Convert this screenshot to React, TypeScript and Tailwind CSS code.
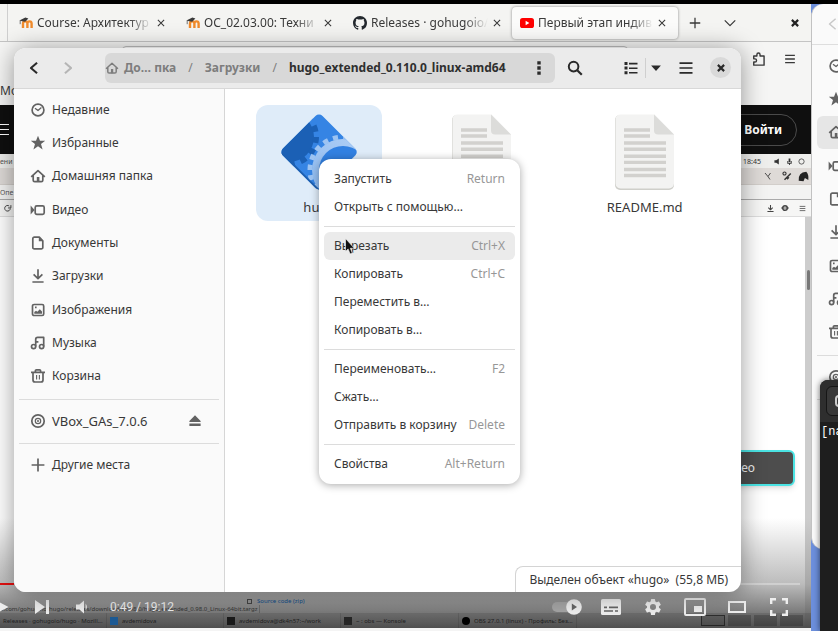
import type { ReactNode } from "react";

const stroke = {
  fill: "none",
  stroke: "currentColor",
  strokeWidth: 1.7,
  strokeLinejoin: "round" as const,
};

function Icon({ children, className = "size-4" }: { children: ReactNode; className?: string }) {
  return (
    <svg viewBox="0 0 16 16" className={`shrink-0 ${className}`} aria-hidden="true">
      {children}
    </svg>
  );
}

const HomeIcon = ({ className }: { className?: string }) => (
  <Icon className={className}>
    <path {...stroke} d="M1.2 8.8 8 2.6l6.8 6.200M3.200 7.500v4.700q0 1.500 1.500 1.500h6.600q1.500 0 1.500-1.500V7.500" />
    <path fill="currentColor" d="M6.8 9h2.6v5H6.8z" />
  </Icon>
);

const CloseIcon = ({ className, bold }: { className?: string; bold?: boolean }) => (
  <Icon className={className}>
    <path {...stroke} strokeWidth={bold ? 3.4 : 1.7} d="m3 3 10 10M13 3 3 13" />
  </Icon>
);

const BarsIcon = ({ className }: { className?: string }) => (
  <Icon className={className}>
    <path {...stroke} d="M1.5 3.2h13M1.5 8h13M1.5 12.8h13" />
  </Icon>
);

const places: { label: string; icon: ReactNode }[] = [
  {
    label: "Недавние",
    icon: (
      <Icon>
        <circle {...stroke} cx="8" cy="8" r="5.9" />
        <path {...stroke} strokeWidth={1.3} d="m5 6.2 3 2.4 3.4-3" />
      </Icon>
    ),
  },
  {
    label: "Избранные",
    icon: (
      <Icon>
        <path fill="currentColor" d="m8 .8 2 5h5.2l-4.2 3.3 1.6 5.4L8 11.3l-4.6 3.2L5 9.1.8 5.8H6z" />
      </Icon>
    ),
  },
  { label: "Домашняя папка", icon: <HomeIcon /> },
  {
    label: "Видео",
    icon: (
      <Icon>
        <rect {...stroke} x="5.2" y="3.8" width="9" height="8.6" rx="1.6" />
        <path fill="currentColor" d="M.6 3.600 4.600 8 .6 12.400z" />
      </Icon>
    ),
  },
  {
    label: "Документы",
    icon: (
      <Icon>
        <path {...stroke} d="M4.3 2.2h5l3.5 3.6v6.6a1.5 1.5 0 0 1-1.5 1.5h-7a1.5 1.5 0 0 1-1.5-1.5V3.7a1.5 1.5 0 0 1 1.5-1.5z" />
        <path fill="currentColor" d="M8.8 2v4.2H13z" />
      </Icon>
    ),
  },
  {
    label: "Загрузки",
    icon: (
      <Icon>
        <path {...stroke} d="M8 1.2v9.2M3.6 6.4 8 10.6l4.4-4.2M2.4 14h11.2" />
      </Icon>
    ),
  },
  {
    label: "Изображения",
    icon: (
      <Icon>
        <rect {...stroke} x="2.5" y="2.5" width="11.2" height="11" rx="1.6" />
        <path fill="currentColor" d="M4.3 11.8V10L6 8.8l1.4 1 2.4-2.6 2.2 2.4v2.2zM5 4.6h1.6v1.6H5z" />
      </Icon>
    ),
  },
  {
    label: "Музыка",
    icon: (
      <Icon>
        <circle {...stroke} cx="3.6" cy="11.6" r="2.1" />
        <circle {...stroke} cx="11.6" cy="11.6" r="2.1" />
        <path {...stroke} d="M5.7 11.6V4.4q0-2 2-2h6v9.2M6 6.8h2.4" />
      </Icon>
    ),
  },
  {
    label: "Корзина",
    icon: (
      <Icon>
        <path {...stroke} d="M1 4.4h14M5.4 4V2.8q0-1 1-1h3.2q1 0 1 1V4M3 4.6v7.4q0 2 2 2h6q2 0 2-2V4.6" />
        <path {...stroke} strokeWidth={1.1} d="M6.6 7v4.6M9.4 7v4.6" />
      </Icon>
    ),
  },
];

const DiscIcon = () => (
  <Icon>
    <circle {...stroke} cx="8" cy="8" r="6.2" />
    <circle {...stroke} strokeWidth={1.2} cx="8" cy="8" r="2.7" />
    <circle fill="currentColor" cx="8" cy="8" r="1" />
  </Icon>
);

function Sidebar({ compact = false, active }: { compact?: boolean; active?: string }) {
  const label = (text: string) => (compact ? null : <span className="text-[#383838]">{text}</span>);
  return (
    <nav className={`flex flex-col px-[5px] pt-1 text-[#626262] ${compact ? "w-[210px]" : "w-[211px] border-r border-[#d6d6d6]"} shrink-0 bg-[#fafafa]`}>
      <ul className="flex h-[300px] flex-col">
        {places.map((p) => (
          <li key={p.label} className="flex flex-1">
            <a
              href="#"
              aria-label={p.label}
              className={`flex flex-1 items-center gap-[6px] rounded-md px-[11px] ${p.label === active ? "bg-[#e6e6e6]" : ""}`}
            >
              {p.icon}
              {label(p.label)}
            </a>
          </li>
        ))}
      </ul>
      <hr className="mt-1.5 mb-1 border-[#dcdcdc]" />
      <div className="flex h-[33px] items-center gap-[6px] pr-4 pl-[11px] text-[13px]">
        <DiscIcon />
        {label("VBox_GAs_7.0.6")}
        {!compact && (
          <button aria-label="Извлечь" className="ml-auto">
            <Icon>
              <path fill="currentColor" d="M8 2.2 13.6 8v1H2.4V8zM2.4 10.6h11.2V13H2.4z" />
            </Icon>
          </button>
        )}
      </div>
      <hr className="mt-1.5 mb-1 border-[#dcdcdc]" />
      <a href="#" aria-label="Другие места" className="flex h-[33px] items-center gap-[6px] pl-[11px]">
        <Icon>
          <path {...stroke} d="M8 1.6v12.8M1.6 8h12.8" />
        </Icon>
        {label("Другие места")}
      </a>
    </nav>
  );
}

const MoodleIcon = () => (
  <svg viewBox="0 0 14 14" className="size-[14px] shrink-0" aria-hidden="true">
    <path fill="none" stroke="#f08b2c" strokeWidth="2.4" d="M4 12V7.6Q4 5.4 6.2 5.4T8.4 7.6V12M8.4 12V7.6q0-2.2 2.1-2.2t2.1 2.2V12" />
    <path fill="#3b3b3b" d="m.4 4.6 6-3 3 .8-3.2 3.4-3-.6z" />
    <path stroke="#3b3b3b" strokeWidth=".7" d="M1.2 4.6v3.6" />
  </svg>
);

const GithubIcon = () => (
  <svg viewBox="0 0 16 16" className="size-[14px] shrink-0" aria-hidden="true">
    <path
      fill="#24292f"
      d="M8 0C3.58 0 0 3.58 0 8c0 3.54 2.29 6.53 5.47 7.59.4.07.55-.17.55-.38 0-.19-.01-.82-.01-1.49-2.01.37-2.53-.49-2.69-.94-.09-.23-.48-.94-.82-1.13-.28-.15-.68-.52-.01-.53.63-.01 1.08.58 1.23.82.72 1.21 1.87.87 2.33.66.07-.52.28-.87.51-1.07-1.78-.2-3.64-.89-3.64-3.95 0-.87.31-1.59.82-2.15-.08-.2-.36-1.02.08-2.12 0 0 .67-.21 2.2.82.64-.18 1.32-.27 2-.27s1.36.09 2 .27c1.53-1.04 2.2-.82 2.2-.82.44 1.1.16 1.92.08 2.12.51.56.82 1.27.82 2.15 0 3.07-1.87 3.75-3.65 3.95.29.25.54.73.54 1.48 0 1.07-.01 1.93-.01 2.2 0 .21.15.46.55.38A8.01 8.01 0 0 0 16 8c0-4.42-3.58-8-8-8z"
    />
  </svg>
);

const YoutubeIcon = () => (
  <svg viewBox="0 0 14 14" className="size-[14px] shrink-0" aria-hidden="true">
    <rect x="0" y="2" width="14" height="10" rx="2.6" fill="#f00" />
    <path fill="#fff" d="m5.6 4.8 3.8 2.2-3.8 2.2z" />
  </svg>
);

const tabs = [
  { title: "Course: Архитектур", icon: <MoodleIcon /> },
  { title: "ОС_02.03.00: Техни", icon: <MoodleIcon /> },
  { title: "Releases · gohugoio/", icon: <GithubIcon /> },
  { title: "Первый этап индив", icon: <YoutubeIcon />, active: true },
];

const tasks = [
  { title: "Releases · gohugoio/hugo · Mozill...", width: "w-[107px]", icon: null },
  { title: "avdemidova", width: "w-[117px]", icon: <span className="size-2 shrink-0 bg-[#1d5a94]" /> },
  { title: "avdemidova@dk4n57:~/work", width: "w-[117px]", icon: <span className="size-2 shrink-0 bg-[#1a1a1a]" /> },
  { title: "~ : obs — Konsole", width: "w-[118px]", icon: <span className="size-2 shrink-0 bg-[#262626]" /> },
  { title: "OBS 27.0.1 (linux) - Профиль: Без...", width: "w-[118px]", icon: <span className="size-2 shrink-0 rounded-full bg-black" /> },
];

function PlayerButton({ label, width = "w-[42px]", children }: { label: string; width?: string; children: ReactNode }) {
  return (
    <button aria-label={label} className={`flex h-full shrink-0 items-center justify-center ${width}`}>
      {children}
    </button>
  );
}

function PlayerControls() {
  return (
    <div className="absolute inset-x-0 bottom-0 text-[#eee]">
      <div className="mr-[11px] flex h-[2px] bg-white/30">
        <span className="w-[14px] bg-[#e01010]" />
      </div>
      <div className="flex h-[43px] items-center pr-[11px]">
        <PlayerButton label="Воспроизвести" width="w-[21px]">
          <svg viewBox="0 0 21 20" className="h-5 w-[21px]">
            <path fill="currentColor" d="M0 5.5 8.5 10 0 14.5z" />
          </svg>
        </PlayerButton>
        <PlayerButton label="Следующее">
          <svg viewBox="0 0 20 20" className="size-5">
            <path fill="currentColor" d="m3 3 10 7-10 7zM14 3h3v14h-3z" />
          </svg>
        </PlayerButton>
        <PlayerButton label="Звук" width="w-10">
          <svg viewBox="0 0 20 20" className="size-5">
            <path fill="currentColor" d="M3 7.4h3.4L11 3.5v13l-4.6-3.9H3zM12.6 6.6q2.6 3.4 0 6.8z" />
          </svg>
        </PlayerButton>
        <span className="ml-[7px] font-['Roboto',sans-serif] text-[12px]">0:49 / 19:12</span>
        <span className="ml-auto" />
        <PlayerButton label="Автовоспроизведение" width="w-[46px]">
          <svg viewBox="0 0 30 16" className="h-4 w-[30px]">
            <rect x="0" y="3" width="26" height="10" rx="5" fill="#a5a5a5" />
            <circle cx="22" cy="8" r="7.8" fill="#eee" />
            <path fill="#666" d="m19.8 4.6 5.2 3.4-5.2 3.4z" />
          </svg>
        </PlayerButton>
        <PlayerButton label="Субтитры">
          <svg viewBox="0 0 20 16" className="h-4 w-5">
            <rect width="20" height="16" rx="1.6" fill="currentColor" />
            <path stroke="#666" strokeWidth="1.6" d="M3 8.4h3M8 8.4h9M3 12h9M14 12h3" />
          </svg>
        </PlayerButton>
        <PlayerButton label="Настройки">
          <svg viewBox="0 0 24 24" className="size-5">
            <path
              fill="currentColor"
              d="M19.14 12.94c.04-.3.06-.61.06-.94 0-.32-.02-.64-.07-.94l2.03-1.58a.49.49 0 0 0 .12-.61l-1.92-3.32a.49.49 0 0 0-.59-.22l-2.39.96a7 7 0 0 0-1.62-.94l-.36-2.54a.48.48 0 0 0-.48-.41h-3.84a.47.47 0 0 0-.47.41l-.36 2.54a7 7 0 0 0-1.62.94l-2.39-.96a.48.48 0 0 0-.59.22L2.74 8.87a.47.47 0 0 0 .12.61l2.03 1.58a6 6 0 0 0-.02 1.88l-2.03 1.58a.49.49 0 0 0-.12.61l1.92 3.32c.12.22.37.29.59.22l2.39-.96a7 7 0 0 0 1.62.94l.36 2.54c.05.24.24.41.48.41h3.84c.24 0 .44-.17.47-.41l.36-2.54a7 7 0 0 0 1.62-.94l2.39.96c.22.08.47 0 .59-.22l1.92-3.32a.47.47 0 0 0-.12-.61zM12 15.6a3.6 3.6 0 1 1 0-7.2 3.6 3.6 0 0 1 0 7.2z"
            />
          </svg>
        </PlayerButton>
        <PlayerButton label="Мини-проигрыватель">
          <svg viewBox="0 0 22 18" className="h-[18px] w-[22px]">
            <rect x="1" y="1" width="20" height="16" rx="1" fill="none" stroke="currentColor" strokeWidth="2" />
            <path fill="currentColor" d="M10 8h8v6h-8z" />
          </svg>
        </PlayerButton>
        <PlayerButton label="Широкий экран">
          <svg viewBox="0 0 18 12" className="h-3 w-[18px]">
            <rect x="1" y="1" width="16" height="10" fill="none" stroke="currentColor" strokeWidth="2" />
          </svg>
        </PlayerButton>
        <PlayerButton label="Полный экран">
          <svg viewBox="0 0 18 18" className="size-[18px]">
            <path fill="none" stroke="currentColor" strokeWidth="2.4" d="M1.2 6V1.2H6M12 1.2h4.8V6M16.8 12v4.8H12M6 16.8H1.2V12" />
          </svg>
        </PlayerButton>
      </div>
    </div>
  );
}

function VideoFrame() {
  return (
    <section className="relative flex flex-1 flex-col overflow-hidden bg-white text-[7px] leading-none text-[#555]">
      <div className="flex h-[14px] shrink-0 items-center justify-between bg-[#eeeeec] pr-[6px]">
        <span>ени</span>
        <div className="flex items-center gap-[5px] text-[#333]">
          <span className="mr-2">18:45</span>
          <Icon className="size-[7px]">
            <path fill="currentColor" d="M1 5h4l6-4v14l-6-4H1z" />
          </Icon>
          <Icon className="size-[7px]">
            <path fill="currentColor" d="M6 1h4v8H6zM3 7h2v4h6V7h2v6H9v3H7v-3H3z" />
          </Icon>
          <Icon className="size-[7px]">
            <circle {...stroke} cx="8" cy="8" r="6" />
          </Icon>
        </div>
      </div>
      <div className="flex h-[17px] shrink-0 items-center justify-end gap-[6px] border-b border-[#d2ceca] bg-[#dedad7] pr-[2px] text-[#333]">
        <Icon className="size-2">
          <path {...stroke} d="m2 2 6 7 5-7M8 9l4 6" />
        </Icon>
        <Icon className="ml-1 size-[10px]">
          <circle {...stroke} cx="4" cy="4" r="2.500" />
          <path {...stroke} strokeWidth={2.4} d="M4 14 14 4M8 13l3-3" />
        </Icon>
        <Icon className="size-[11px]">
          <path fill="#222" d="M1 14Q0 2 12 1q4 4 3 12l-5-3-2 5z" />
        </Icon>
      </div>
      <div className="flex h-[15px] shrink-0 items-center border-b border-[#aaa] bg-[#f3f3f2]">Опе</div>
      <div className="flex h-[17px] shrink-0 items-center border-b border-[#ddd] bg-[#f6f6f5] pr-[5px] pl-[3px] text-[#444]">
        <Icon className="size-[9px]">
          <path {...stroke} d="M13 8a5 5 0 1 1-2-4.4M14 2v5H9" />
        </Icon>
        <div className="ml-auto flex items-center gap-[7px]">
          <Icon className="size-[7px]">
            <path {...stroke} strokeWidth={2.4} d="M8 0v10M3 6l5 5 5-5M1 15h14" />
          </Icon>
          <Icon className="size-[8px]">
            <circle {...stroke} strokeWidth={3} cx="8" cy="8" r="4.6" />
            <path {...stroke} d="M0 8h16" />
          </Icon>
          <BarsIcon className="ml-[3px] size-[7px]" />
        </div>
      </div>
      <div className="flex flex-1 justify-end bg-white">
        <div className="mt-[233px] mr-[10px] flex h-9 w-[130px] items-center justify-end rounded-md border-2 border-[#4be3e3] bg-[#4d4d4d] pr-[38px] text-[12px] text-[#eee] shadow-md">
          ео
        </div>
        <div className="flex w-[6px] justify-center bg-[#cdcdcd] pt-[53px]">
          <span className="h-5 w-[3px] rounded-full bg-[#777]" />
        </div>
      </div>
      <div className="absolute inset-x-0 bottom-0 h-[110px] bg-linear-to-b from-transparent via-[#8f8f8f]/60 via-60% to-[#585858]" />
      <div className="absolute inset-x-0 bottom-0 text-[#1f1f1f]">
        <div className="flex items-center gap-[5px] pb-px pl-[247px] text-[6px] text-[#0f4c8a]">
          <span className="size-[5px] border border-[#444]" />
          <span>Source code (zip)</span>
        </div>
        <div className="flex h-2 w-[260px] items-center border-r border-black/20 whitespace-nowrap text-[6px] text-[#333]">
          b.com/gohugoio/hugo/releases/download/v0.98.0/hugo_extended_0.98.0_Linux-64bit.targz
        </div>
        <div className="flex h-[15px] items-center bg-black/10 text-[6px] whitespace-nowrap">
          {tasks.map((t) => (
            <span key={t.title} className={`flex h-full items-center gap-1 overflow-hidden border-r border-black/10 pl-[3px] ${t.width}`}>
              {t.icon}
              {t.title}
            </span>
          ))}
          <div className="mr-2 ml-auto flex h-[11px] gap-[3px]">
            <span className="w-6 border border-black/50 bg-black/10" />
            <span className="w-[23px] bg-black/20" />
            <span className="w-[23px] bg-black/20" />
            <span className="w-[23px] bg-black/20" />
          </div>
        </div>
      </div>
      <PlayerControls />
    </section>
  );
}

function Browser() {
  return (
    <div className="absolute inset-y-0 right-[27px] left-0 flex flex-col bg-[#f5f5f4] pt-1 text-[#3a3a3a]">
      <div className="flex h-[38px] shrink-0 items-center border-b border-[#c4c4c4] bg-[#f4f4f2]">
        <span className="mr-[3px] h-full w-2 shrink-0 border-r border-[#cfcfcf]" />
        <div role="tablist" className="flex gap-px">
          {tabs.map((t) => (
            <div
              key={t.title}
              role="tab"
              aria-selected={!!t.active}
              className={`flex h-8 w-[166px] items-center gap-1 rounded pr-[11px] pl-2 ${t.active ? "bg-[#fbfbfa] shadow-[0_0_3px_rgba(0,0,0,0.45)]" : ""}`}
            >
              {t.icon}
              <span className="w-[120px] [mask-image:linear-gradient(to_right,black_80%,transparent)] whitespace-nowrap">
                {t.title}
              </span>
              <button aria-label="Закрыть вкладку" className="ml-auto">
                <CloseIcon className="size-[10px]" />
              </button>
            </div>
          ))}
        </div>
        <button aria-label="Новая вкладка" className="ml-[11px]">
          <Icon className="size-3">
            <path {...stroke} d="M8 1v14M1 8h14" />
          </Icon>
        </button>
        <button aria-label="Список вкладок" className="ml-[23px]">
          <Icon className="size-3">
            <path {...stroke} d="m1 4.5 7 7 7-7" />
          </Icon>
        </button>
        <button aria-label="Закрыть окно" className="mr-[11px] ml-auto text-[#222]">
          <CloseIcon bold className="size-[10px]" />
        </button>
      </div>
      <div className="flex h-[38px] shrink-0 items-start pt-1 pr-[15px] pl-[122px]">
        <div className="mr-[125px] h-[30px] flex-1 rounded border border-[#bdbdbd] bg-white" />
        <div className="-ml-px flex items-center gap-[18px] pt-[6px]">
          <button aria-label="Расширения">
            <Icon className="size-[14px]">
              <path {...stroke} strokeWidth={1.6} d="M2 4.6h3.6V3a1.7 1.7 0 0 1 3.6 0v1.6h4.6V15H2v-3.6h1.4a1.7 1.7 0 0 0 0-3.6H2z" />
            </Icon>
          </button>
          <button aria-label="Меню">
            <BarsIcon className="size-3" />
          </button>
        </div>
      </div>
      <div className="h-[25px] shrink-0 pt-px">Мо</div>
      <header className="flex h-[49px] shrink-0 items-center justify-between bg-[#0f0f0f] pr-[14px] text-white">
        <svg viewBox="0 0 9 12" className="h-3 w-[9px]" aria-hidden="true">
          <path stroke="#fff" d="M0 .5h9M0 5.5h9M0 10.5h9" />
        </svg>
        <a href="#" className="rounded-full border border-[#4a4a4a] py-[5px] pr-[14px] pl-5 font-bold">
          Войти
        </a>
      </header>
      <VideoFrame />
      <div className="h-[3px] shrink-0 bg-[#f4f4f4]" />
    </div>
  );
}

const DocumentIcon = () => (
  <svg viewBox="0 0 60 76" className="h-[76px] w-[60px]" aria-hidden="true">
    <path fill="#cfcfca" d="M5 1h34l20 20v50a5 5 0 0 1-5 5H5a5 5 0 0 1-5-5V6a5 5 0 0 1 5-5z" />
    <path fill="#f3f3f2" d="M5.5.5h34l19.5 20v49a5 5 0 0 1-5 5H5.5a5 5 0 0 1-5-5v-64a5 5 0 0 1 5-5z" />
    <path fill="#dcdcda" d="M39 .5 59 20.500H43a4 4 0 0 1-4-4z" />
    <path stroke="#d2d1ce" strokeWidth="3.4" d="M9 16h26M9 22h26M9 29h42M9 35.200h42M9 42.200h42M9 48.400h42M9 55.500h42M9 61.500h42" />
  </svg>
);

const ExecutableIcon = () => (
  <svg viewBox="0 0 76 76" className="size-[76px]" aria-hidden="true">
    <defs>
      <clipPath id="diamond">
        <rect x="10" y="10" width="56" height="56" rx="5" transform="rotate(45 38 38)" />
      </clipPath>
      <linearGradient id="gear" x1="0" y1="1" x2="1" y2="0">
        <stop offset="0" stopColor="#8ab8f0" />
        <stop offset="1" stopColor="#b4d1f5" />
      </linearGradient>
    </defs>
    <g clipPath="url(#diamond)">
      <path fill="#3584e4" d="M0 0h76v76H0z" />
      <circle cx="8" cy="23" r="25" fill="#1b60b5" />
      <circle cx="8" cy="23" r="27" fill="none" stroke="#1b60b5" strokeWidth="6" strokeDasharray="6.100 6.020" />
      <circle cx="62" cy="56" r="31" fill="url(#gear)" />
      <circle cx="62" cy="56" r="33" fill="none" stroke="#9cc3f2" strokeWidth="5" strokeDasharray="5.180 5.180" />
      <circle cx="62" cy="56" r="24" fill="#3281e2" />
      <path fill="none" stroke="#1d5fb0" strokeWidth="3" d="m0 39 38 38" />
    </g>
  </svg>
);

const files: { id: number; name?: string; icon: ReactNode; selected?: boolean }[] = [
  { id: 1, name: "hugo", icon: <ExecutableIcon />, selected: true },
  { id: 2, icon: <DocumentIcon /> },
  { id: 3, name: "README.md", icon: <DocumentIcon /> },
];

function FileManager() {
  return (
    <main className="absolute top-12 right-[97px] bottom-[39px] left-[14px] flex flex-col overflow-hidden rounded-xl bg-white shadow-[0_2px_24px_rgba(0,0,0,0.4)]">
      <header className="flex h-[41px] shrink-0 items-center border-b border-[#d8d8d8] bg-[#ebebeb] pr-[10px] pb-px pl-[13px] text-[#2a2a2a]">
        <button aria-label="Назад">
          <Icon className="size-[14px]">
            <path {...stroke} strokeWidth={2.4} d="M11.500 2 4.500 8l7 6" />
          </Icon>
        </button>
        <button aria-label="Вперёд" className="ml-5 text-[#b5b5b5]">
          <Icon className="size-[14px]">
            <path {...stroke} strokeWidth={2.4} d="m4.500 2 7 6-7 6" />
          </Icon>
        </button>
        <div className="ml-[30px] flex h-[30px] flex-1 items-center rounded-md bg-[#d8d8d8] font-bold whitespace-nowrap text-[#7d7d7d]">
          <HomeIcon className="mr-[5px] size-[14px]" />
          <a href="#">До… пка</a>
          <span className="mx-3 font-normal">/</span>
          <a href="#">Загрузки</a>
          <span className="mx-3 font-normal">/</span>
          <a href="#" className="text-[#2f2f2f]">hugo_extended_0.110.0_linux-amd64</a>
          <button aria-label="Меню папки" className="mr-2 ml-auto text-[#2a2a2a]">
            <Icon>
              <path fill="currentColor" d="M6.300 1.200h3.400v3.400H6.300zM6.300 6.300h3.400v3.400H6.300zM6.300 11.400h3.400v3.400H6.300z" />
            </Icon>
          </button>
        </div>
        <button aria-label="Поиск" className="ml-3">
          <Icon>
            <circle {...stroke} strokeWidth={2} cx="6.600" cy="6.600" r="4.800" />
            <path {...stroke} strokeWidth={2.200} d="m10.200 10.200 4.600 4.600" />
          </Icon>
        </button>
        <button aria-label="Вид списком" className="mr-[6px] ml-10">
          <Icon>
            <path fill="currentColor" d="M1.500 2h3v3h-3zM1.500 6.600h3v3h-3zM1.500 11.200h3v3h-3zM6 2.800h8.500v1.600H6zM6 7.400h8.500V9H6zM6 12h8.500v1.600H6z" />
          </Icon>
        </button>
        <span className="h-5 w-px bg-[#cfcfcf]" />
        <button aria-label="Параметры вида" className="ml-1">
          <Icon className="size-3">
            <path fill="currentColor" d="M1.500 4.500h13L8 12z" />
          </Icon>
        </button>
        <button aria-label="Главное меню" className="ml-4">
          <BarsIcon />
        </button>
        <button aria-label="Закрыть" className="ml-4 flex size-[21px] items-center justify-center rounded-full bg-[#d9d9d9]">
          <CloseIcon bold className="size-[10px]" />
        </button>
      </header>
      <div className="flex flex-1">
        <Sidebar />
        <div className="flex flex-1 flex-col">
          <ul className="grid grid-cols-3 pr-[15px] pl-[13px] pt-4">
            {files.map((f) => (
              <li key={f.id} className="flex justify-center text-[13px]">
                <div className={`flex h-[116px] w-[126px] flex-col items-center gap-[7px] rounded-xl pt-[9px] ${f.selected ? "bg-[#dfecf9]" : ""}`}>
                  {f.icon}
                  {f.name && <span>{f.name}</span>}
                </div>
              </li>
            ))}
          </ul>
          <div className="mt-auto self-end rounded-tl-lg border-t border-l border-[#d4d4d4] px-[13px] pt-[3px] pb-[2px] whitespace-pre">
            Выделен объект «hugo»  (55,8 МБ)
          </div>
        </div>
      </div>
    </main>
  );
}

const menuGroups: [string, string?][][] = [
  [["Запустить", "Return"], ["Открыть с помощью…"]],
  [["Вырезать", "Ctrl+X"], ["Копировать", "Ctrl+C"], ["Переместить в…"], ["Копировать в…"]],
  [["Переименовать…", "F2"], ["Сжать…"], ["Отправить в корзину", "Delete"]],
  [["Свойства", "Alt+Return"]],
];

function ContextMenu() {
  return (
    <div role="menu" className="absolute top-[159px] left-[319px] w-[201px] rounded-xl bg-white px-[5px] py-[6px] shadow-[0_1px_8px_rgba(0,0,0,0.35)]">
      {menuGroups.map((group, i) => (
        <div key={group[0][0]}>
          {i > 0 && <hr className="my-[5px] border-[#dcdcdc]" />}
          {group.map(([label, keys]) => (
            <button
              key={label}
              role="menuitem"
              className={`flex h-7 w-full items-center justify-between rounded-md px-[10px] whitespace-nowrap ${label === "Вырезать" ? "bg-[#ebebeb]" : ""}`}
            >
              <span>{label}</span>
              {keys && <span className="text-[#979797]">{keys}</span>}
            </button>
          ))}
        </div>
      ))}
    </div>
  );
}

export default function App() {
  return (
    <div className="relative h-screen overflow-hidden bg-[#6c8fdc] font-['Noto_Sans',sans-serif] text-[12px] leading-5 text-[#383838]">
      <Browser />
      <aside className="absolute top-1 right-0 bottom-[82px] w-[27px] overflow-hidden rounded-l-xl border-l border-[#c2c2c2] bg-[#fafafa]">
        <div className="flex h-[41px] items-center border-b border-[#dedede] pl-[14px] text-[#c8c8c8]">
          <Icon className="size-[14px]">
            <path {...stroke} d="M11 2 4 8l7 6" />
          </Icon>
        </div>
        <Sidebar compact active="Домашняя папка" />
      </aside>
      <section className="absolute top-[380px] right-0 bottom-0 w-[18px] overflow-hidden rounded-tl-lg bg-[#1e1e1e] font-['Liberation_Mono',monospace] text-white shadow-[0_0_6px_rgba(0,0,0,0.6)]">
        <div className="flex h-[42px] items-center bg-[#2e2e2e] pl-[6px]">
          <button aria-label="Новая вкладка" className="flex h-[30px] w-10 shrink-0 items-center rounded-md border border-[#161616] bg-[#383838] pl-2">
            <span className="h-3 w-4 rounded-sm border-2 border-[#ccc]" />
          </button>
        </div>
        <div className="pl-px">[na</div>
      </section>
      <FileManager />
      <ContextMenu />
      <svg viewBox="0 0 10 17" className="absolute top-[238px] left-[345px] h-[17px] w-[10px]" aria-hidden="true">
        <path fill="#111" stroke="#fff" strokeWidth=".6" d="M.5.500v13l2.600-2.600 2 5 2.200-1-2-4.600h4z" />
      </svg>
      <div className="absolute inset-x-0 top-0 h-1 bg-black" />
    </div>
  );
}
